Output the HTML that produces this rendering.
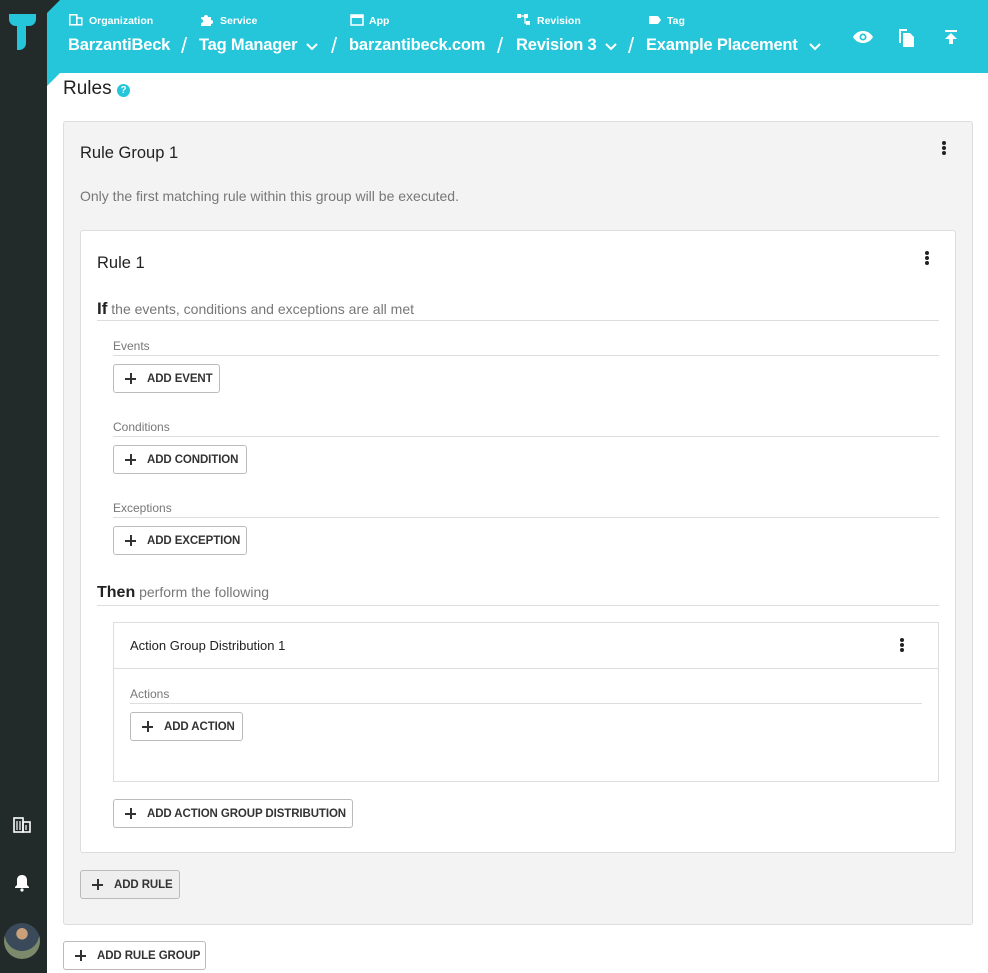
<!DOCTYPE html>
<html><head><meta charset="utf-8"><style>
*{box-sizing:border-box;margin:0;padding:0}
body{width:988px;height:973px;position:relative;overflow:hidden;background:#fff;font-family:"Liberation Sans",sans-serif;color:#222}
.a{position:absolute}
.side{left:0;top:0;width:47px;height:973px;background:#222a2a}
.hdr{left:47px;top:0;width:941px;height:73px;background:#26c6da}
.lbl{font-size:10.5px;color:#fff;top:15px;font-weight:bold}
.main{font-size:16.5px;color:#fff;top:36px;font-weight:bold;letter-spacing:-0.2px;white-space:nowrap}
.sl{font-size:22px;color:#fff;top:33px}
.btn{position:absolute;height:29px;border:1px solid #bbb;border-radius:3px;background:#fff;font-size:11.5px;font-weight:bold;color:#333;line-height:28px;padding-left:33px;white-space:nowrap;letter-spacing:-0.1px}
.btn:before{content:"";position:absolute;left:11px;top:13px;width:11px;height:1.5px;background:#333}
.btn:after{content:"";position:absolute;left:16px;top:8px;width:1.5px;height:11px;background:#333}
.small{font-size:12px;color:#777}
.line{height:1px;background:#ddd}
.dots{width:4px}
.dots i{display:block;width:3.5px;height:3.5px;border-radius:2px;background:#222;margin-bottom:1.5px}
</style></head><body>
<div class="a side"></div>
<div class="a hdr"></div>
<svg class="a" style="left:47px;top:0" width="14" height="14"><polygon points="0,0 13,0 0,13" fill="#222a2a"/></svg>
<svg class="a" style="left:47px;top:73px" width="14" height="14"><polygon points="0,0 13,0 0,13" fill="#26c6da"/></svg>
<svg class="a" style="left:0;top:0" width="47" height="60"><path d="M9 14h27v5c0 4-3 7-7 7h-3v17c0 4-3 7-7 7h-2V26h-1c-4 0-7-3-7-7z" fill="#26c6da"/></svg>
<svg class="a" style="left:69px;top:14px" width="14" height="12"><rect x="0.8" y="0.8" width="7" height="10" fill="none" stroke="#fff" stroke-width="1.5"/><rect x="7.8" y="4" width="5" height="6.8" fill="none" stroke="#fff" stroke-width="1.5"/></svg>
<div class="a lbl" style="left:89px">Organization</div>
<svg class="a" style="left:200px;top:13px" width="14" height="14"><path d="M1 4h3a2 2 0 1 1 4 0h3v3a2 2 0 1 1 0 4v2H1v-3a2 2 0 1 0 0-4z" fill="#fff"/></svg>
<div class="a lbl" style="left:220px">Service</div>
<svg class="a" style="left:350px;top:14px" width="14" height="12"><rect x="1" y="1" width="12" height="10" fill="none" stroke="#fff" stroke-width="1.5"/><rect x="1" y="1" width="12" height="3" fill="#fff"/></svg>
<div class="a lbl" style="left:369px">App</div>
<svg class="a" style="left:517px;top:13px" width="14" height="13"><rect x="0" y="1" width="4" height="4" fill="#fff"/><rect x="7" y="1" width="4" height="4" fill="#fff"/><rect x="9" y="8" width="4" height="4" fill="#fff"/><path d="M4 3h3M8 5v5h1" stroke="#fff" stroke-width="1.2" fill="none"/></svg>
<div class="a lbl" style="left:537px">Revision</div>
<svg class="a" style="left:648px;top:15px" width="14" height="10"><path d="M1 1h9l3 4-3 4H1z" fill="#fff"/></svg>
<div class="a lbl" style="left:667px">Tag</div>
<div class="a main" style="left:68px">BarzantiBeck</div>
<div class="a sl" style="left:181px">/</div>
<div class="a main" style="left:199px">Tag Manager</div>
<svg class="a" style="left:306px;top:43px" width="12" height="8"><path d="M1 1l5 5 5-5" stroke="#fff" stroke-width="2" fill="none"/></svg>
<div class="a sl" style="left:331px">/</div>
<div class="a main" style="left:349px">barzantibeck.com</div>
<div class="a sl" style="left:497px">/</div>
<div class="a main" style="left:516px">Revision 3</div>
<svg class="a" style="left:605px;top:43px" width="12" height="8"><path d="M1 1l5 5 5-5" stroke="#fff" stroke-width="2" fill="none"/></svg>
<div class="a sl" style="left:628px">/</div>
<div class="a main" style="left:646px">Example Placement</div>
<svg class="a" style="left:809px;top:43px" width="12" height="8"><path d="M1 1l5 5 5-5" stroke="#fff" stroke-width="2" fill="none"/></svg>
<svg class="a" style="left:852px;top:30px" width="22" height="14"><path d="M1 7C4 2 8 1 11 1s7 1 10 6c-3 5-7 6-10 6S4 12 1 7z" fill="#fff"/><circle cx="11" cy="7" r="3.5" fill="#26c6da"/><circle cx="11" cy="7" r="1.8" fill="#fff"/></svg>
<svg class="a" style="left:898px;top:28px" width="18" height="20"><path d="M1 1h8v2H3v12H1z" fill="#fff"/><path d="M5 5h7l4 4v10H5z" fill="#fff"/></svg>
<svg class="a" style="left:944px;top:29px" width="14" height="16"><rect x="1" y="1" width="12" height="2" fill="#fff"/><path d="M7 4l6 6H9v5H5v-5H1z" fill="#fff"/></svg>
<div class="a" style="left:63px;top:78px;font-size:19px;color:#222">Rules</div>
<div class="a" style="left:117px;top:84px;width:13px;height:13px;border-radius:50%;background:#26c6da;color:#fff;font-size:10px;font-weight:bold;text-align:center;line-height:13px">?</div>
<div class="a" style="left:63px;top:121px;width:910px;height:804px;background:#f3f3f3;border:1px solid #ddd;border-radius:3px"></div>
<div class="a" style="left:80px;top:144px;font-size:16.5px">Rule Group 1</div>
<div class="a dots" style="left:942px;top:141px"><i></i><i></i><i></i></div>
<div class="a" style="left:80px;top:188px;font-size:14px;color:#777">Only the first matching rule within this group will be executed.</div>
<div class="a" style="left:80px;top:230px;width:876px;height:623px;background:#fff;border:1px solid #ddd;border-radius:3px"></div>
<div class="a" style="left:97px;top:254px;font-size:16.5px">Rule 1</div>
<div class="a dots" style="left:925px;top:251px"><i></i><i></i><i></i></div>
<div class="a" style="left:97px;top:299px;font-size:14px;color:#777"><b style="font-size:17px;color:#222">If</b> the events, conditions and exceptions are all met</div>
<div class="a line" style="left:97px;top:320px;width:842px"></div>
<div class="a small" style="left:113px;top:339px">Events</div>
<div class="a line" style="left:113px;top:355px;width:826px"></div>
<div class="btn" style="left:113px;top:364px;width:107px">ADD EVENT</div>
<div class="a small" style="left:113px;top:420px">Conditions</div>
<div class="a line" style="left:113px;top:436px;width:826px"></div>
<div class="btn" style="left:113px;top:445px;width:134px">ADD CONDITION</div>
<div class="a small" style="left:113px;top:501px">Exceptions</div>
<div class="a line" style="left:113px;top:517px;width:826px"></div>
<div class="btn" style="left:113px;top:526px;width:134px">ADD EXCEPTION</div>
<div class="a" style="left:97px;top:584px;font-size:14px;color:#777"><b style="font-size:16px;color:#222">Then</b> perform the following</div>
<div class="a line" style="left:97px;top:605px;width:842px"></div>
<div class="a" style="left:113px;top:622px;width:826px;height:160px;border:1px solid #ddd"></div>
<div class="a line" style="left:114px;top:668px;width:824px"></div>
<div class="a" style="left:130px;top:638px;font-size:13px;color:#222">Action Group Distribution 1</div>
<div class="a dots" style="left:900px;top:638px"><i></i><i></i><i></i></div>
<div class="a small" style="left:130px;top:687px">Actions</div>
<div class="a line" style="left:130px;top:703px;width:792px"></div>
<div class="btn" style="left:130px;top:712px;width:113px">ADD ACTION</div>
<div class="btn" style="left:113px;top:799px;width:240px">ADD ACTION GROUP DISTRIBUTION</div>
<div class="btn" style="left:80px;top:870px;width:100px;background:#eee">ADD RULE</div>
<div class="btn" style="left:63px;top:941px;width:143px">ADD RULE GROUP</div>
<svg class="a" style="left:13px;top:817px" width="18" height="16"><rect x="1" y="1" width="9" height="14" fill="none" stroke="#fff" stroke-width="1.6"/><rect x="10" y="5" width="7" height="10" fill="none" stroke="#fff" stroke-width="1.6"/><path d="M4 4v9M7 4v9M13 8v5" stroke="#fff" stroke-width="1.2"/></svg>
<svg class="a" style="left:14px;top:874px" width="16" height="18"><path d="M8 1c-3 0-5 2-5 5v5l-2 2v1h14v-1l-2-2V6c0-3-2-5-5-5z" fill="#fff"/><circle cx="8" cy="16" r="1.6" fill="#fff"/></svg>
<div class="a" style="left:4px;top:923px;width:36px;height:36px;border-radius:50%;background:radial-gradient(circle at 50% 30%,#c9a07a 0 18%,#3a4a5a 19% 55%,#7a8a6a 56%)"></div>
</body></html>
